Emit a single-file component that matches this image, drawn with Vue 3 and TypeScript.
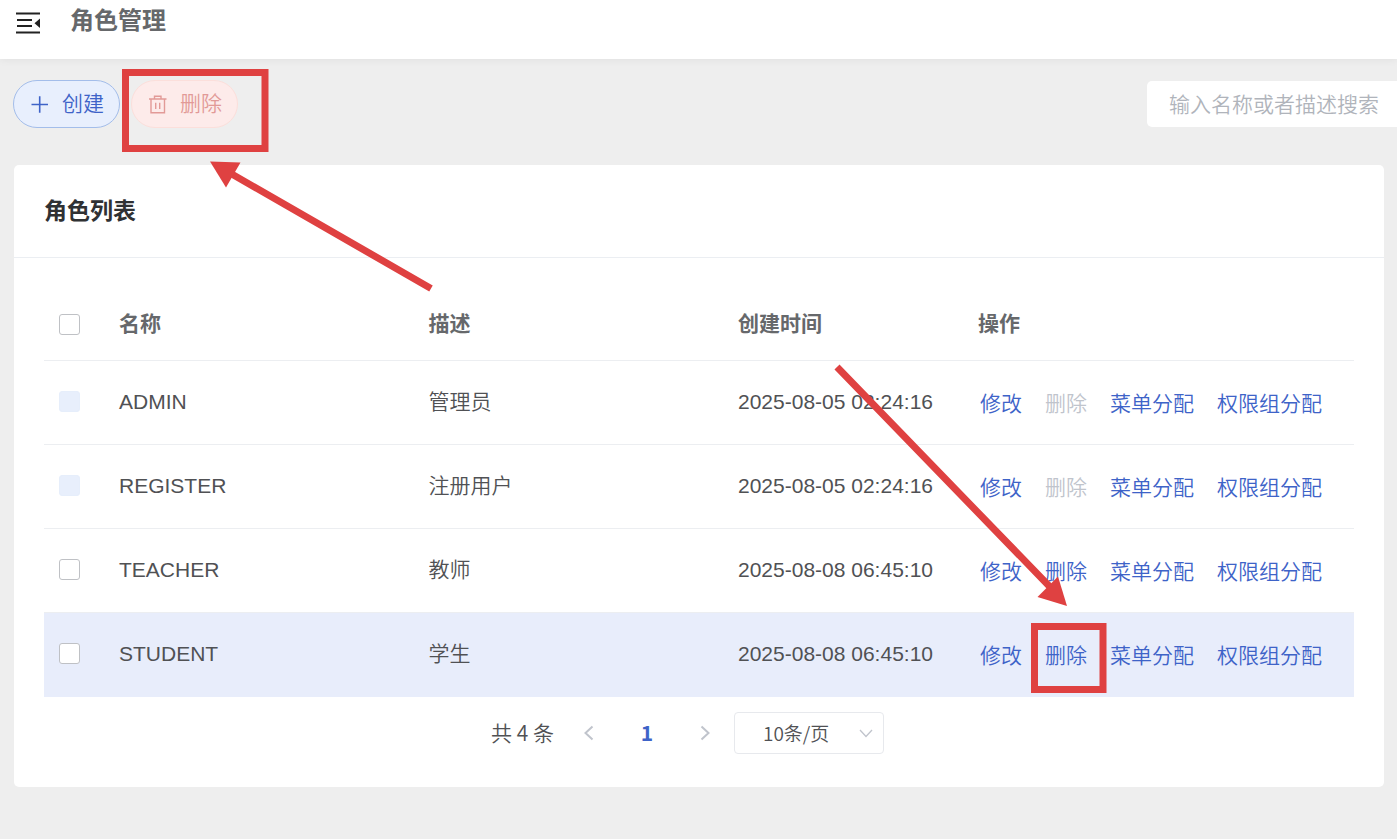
<script setup lang="ts">
import { ref } from 'vue'

interface Role {
  name: string
  description: string
  createdAt: string
  builtIn: boolean
}

const roles: Role[] = [
  { name: 'ADMIN', description: '管理员', createdAt: '2025-08-05 02:24:16', builtIn: true },
  { name: 'REGISTER', description: '注册用户', createdAt: '2025-08-05 02:24:16', builtIn: true },
  { name: 'TEACHER', description: '教师', createdAt: '2025-08-08 06:45:10', builtIn: false },
  { name: 'STUDENT', description: '学生', createdAt: '2025-08-08 06:45:10', builtIn: false },
]

const current = ref('STUDENT')
const selected = ref<string[]>([])
const keyword = ref('')
const pageSize = ref('10')

function toggleAll(event: Event) {
  const checked = (event.target as HTMLInputElement).checked
  selected.value = checked ? roles.filter((r) => !r.builtIn).map((r) => r.name) : []
}
</script>

<template>
  <div class="page">
    <header class="topbar">
      <button class="fold" type="button" aria-label="折叠菜单">
        <svg width="24" height="22" viewBox="0 0 24 22" fill="none" stroke="#222" stroke-width="2">
          <path d="M0 1.5H24M1 8H16M1 14H16M0 20.5H24" />
          <path d="M24 6.5V16L18.500 11.200Z" fill="#222" stroke="none" />
        </svg>
      </button>
      <h1>角色管理</h1>
    </header>

    <main>
      <div class="toolbar">
        <button class="btn create" type="button">
          <svg width="21" height="21" viewBox="0 0 21 21" fill="none" stroke="currentColor" stroke-width="1.600">
            <path d="M2.500 10.500H19M10.700 2.200V18.800" />
          </svg>
          <span>创建</span>
        </button>
        <button class="btn remove" type="button" disabled>
          <svg width="21" height="21" viewBox="0 0 21 21" fill="none" stroke="currentColor" stroke-width="1.400">
            <path d="M2 5H19.500M7.500 5V2.200H14V5M4 5V18.800H17.500V5M8.700 8.800V15M12.700 8.800V15" />
          </svg>
          <span>删除</span>
        </button>
        <input v-model="keyword" class="search" type="text" placeholder="输入名称或者描述搜索" aria-label="输入名称或者描述搜索" />
      </div>

      <section class="card">
        <h2>角色列表</h2>
        <div class="body">
          <table>
            <colgroup>
              <col class="c-check" />
              <col />
              <col />
              <col class="c-time" />
              <col class="c-ops" />
            </colgroup>
            <thead>
              <tr>
                <th><input type="checkbox" aria-label="全选" @change="toggleAll" /></th>
                <th>名称</th>
                <th>描述</th>
                <th>创建时间</th>
                <th>操作</th>
              </tr>
            </thead>
            <tbody>
              <tr v-for="role in roles" :key="role.name" :class="{ current: role.name === current }" @click="current = role.name">
                <td>
                  <input v-model="selected" type="checkbox" :value="role.name" :disabled="role.builtIn" :aria-label="role.name" />
                </td>
                <td>{{ role.name }}</td>
                <td>{{ role.description }}</td>
                <td>{{ role.createdAt }}</td>
                <td>
                  <div class="ops">
                    <button type="button">修改</button>
                    <button type="button" :disabled="role.builtIn">删除</button>
                    <button type="button">菜单分配</button>
                    <button type="button">权限组分配</button>
                  </div>
                </td>
              </tr>
            </tbody>
          </table>

          <nav class="pager" aria-label="分页">
            <span class="total">共 4 条</span>
            <button type="button" disabled aria-label="上一页">
              <svg width="10" height="16" viewBox="0 0 10 16" fill="none" stroke="currentColor" stroke-width="2">
                <path d="M8.500 1.500L1.500 8L8.500 14.500" />
              </svg>
            </button>
            <button class="active" type="button">1</button>
            <button type="button" disabled aria-label="下一页">
              <svg width="10" height="16" viewBox="0 0 10 16" fill="none" stroke="currentColor" stroke-width="2">
                <path d="M1.500 1.500L8.500 8L1.500 14.500" />
              </svg>
            </button>
            <div class="size">
              <select v-model="pageSize" aria-label="每页条数">
                <option value="10">10条/页</option>
                <option value="20">20条/页</option>
              </select>
              <svg width="14" height="9" viewBox="0 0 14 9" fill="none" stroke="#c0c4cc" stroke-width="1.300">
                <path d="M1 1L7 7.500L13 1" />
              </svg>
            </div>
          </nav>
        </div>
      </section>
    </main>

    <svg class="marks" width="1397" height="839" viewBox="0 0 1397 839" aria-hidden="true">
      <g fill="none" stroke="#df4141" stroke-width="7">
        <rect x="125.500" y="72.500" width="139.500" height="76" />
        <rect x="1034.500" y="626.500" width="68.500" height="63" />
        <path d="M431 288.500L230 173M837 367L1052 589" />
      </g>
      <g fill="#df4141">
        <path d="M210 161.500L240.500 162.500L226 187.500Z" />
        <path d="M1067 606L1058 576.500L1037.500 597Z" />
      </g>
    </svg>
  </div>
</template>

<style>
body {
  margin: 0;
  background: #eee;
}
</style>

<style scoped>
* {
  box-sizing: border-box;
}

.page {
  position: relative;
  min-height: 100vh;
  overflow: hidden;
  background: #eee;
  color: #505154;
  font: 350 21px/24px "Liberation Sans", "Noto Sans CJK SC", sans-serif;
}

button,
input,
select {
  margin: 0;
  padding: 0;
  border: 0;
  background: none;
  color: inherit;
  font: inherit;
}

.topbar {
  position: relative;
  display: flex;
  align-items: flex-start;
  gap: 30px;
  height: 59px;
  padding: 9px 16px 0;
  background: #fff;
  box-shadow: 0 1px 8px rgba(0, 0, 0, 0.06);
}

.fold {
  display: flex;
  padding: 3px 0;
}

h1 {
  margin: 0;
  color: #66686b;
  font-size: 24px;
  line-height: 24px;
}

.toolbar {
  display: flex;
  align-items: center;
  gap: 11px;
  padding: 21px 0 37px 13px;
}

.btn {
  display: flex;
  align-items: center;
  gap: 12px;
  height: 48px;
  padding: 0 15px;
  border: 1px solid;
  border-radius: 24px;
}

.create {
  border-color: #a3bdea;
  background: #e8effd;
  color: #3e63c8;
}

.remove {
  border-color: #fcdfdb;
  background: #fdebea;
  color: #e29a97;
}

.search {
  width: 250px;
  height: 46px;
  margin-left: auto;
  padding: 2px 0 0 22px;
  border-radius: 5px 0 0 5px;
  background: #fff;
}

.search::placeholder {
  color: #b0b4bb;
  opacity: 1;
}

.card {
  margin: 0 13px 52px 14px;
  border-radius: 5px;
  background: #fff;
}

h2 {
  margin: 0;
  padding: 34px 30px;
  border-bottom: 1px solid #ebeef2;
  color: #303133;
  font-size: 23px;
  line-height: 24px;
}

.body {
  padding: 30px 30px 33px;
}

table {
  width: 100%;
  border-collapse: separate;
  border-spacing: 0;
  table-layout: fixed;
}

.c-check {
  width: 60px;
}

.c-time {
  width: 240px;
}

.c-ops {
  width: 391px;
}

th,
td {
  height: 84px;
  padding: 0 15px;
  border-bottom: 1px solid #eceef1;
  text-align: left;
  white-space: nowrap;
}

td {
  padding-bottom: 2px;
}

th {
  height: 73px;
  color: #66686b;
  font-weight: 700;
}

.current td {
  border-color: #e8edfb;
  background: #e8edfb;
}

input[type="checkbox"] {
  display: block;
  width: 21px;
  height: 21px;
  border: 1px solid #bfc1c5;
  border-radius: 3px;
  appearance: none;
  background: #fff;
}

input[type="checkbox"]:checked {
  border-color: #3e63c8;
  background: #3e63c8;
}

input[type="checkbox"]:disabled {
  border-color: #e6eefb;
  background: #e8effc;
}

.ops {
  display: flex;
  gap: 23px;
  padding: 4px 0 0 2px;
}

.ops button {
  color: #3e63c8;
}

.ops button:disabled {
  color: #c0c4cc;
}

.pager {
  display: flex;
  align-items: center;
  justify-content: center;
  height: 42px;
  margin-top: 15px;
  padding-right: 23px;
  font-family: "Noto Sans CJK SC", sans-serif;
}

.total {
  margin-right: 6px;
  padding-bottom: 3px;
}

.pager button {
  display: flex;
  align-items: center;
  justify-content: center;
  width: 58px;
  height: 42px;
  color: #c0c4cc;
}

.pager .active {
  padding-bottom: 3px;
  color: #3e63c8;
  font-weight: 700;
}

.size {
  display: grid;
  align-items: center;
  width: 150px;
  height: 42px;
}

.size > * {
  grid-area: 1 / 1;
}

.size select {
  width: 100%;
  height: 42px;
  padding-left: 28px;
  border: 1px solid #e7e9ed;
  border-radius: 4px;
  appearance: none;
  font-size: 19px;
}

.size svg {
  justify-self: end;
  margin-right: 11px;
  pointer-events: none;
}

.marks {
  position: absolute;
  top: 0;
  left: 0;
  pointer-events: none;
}
</style>
